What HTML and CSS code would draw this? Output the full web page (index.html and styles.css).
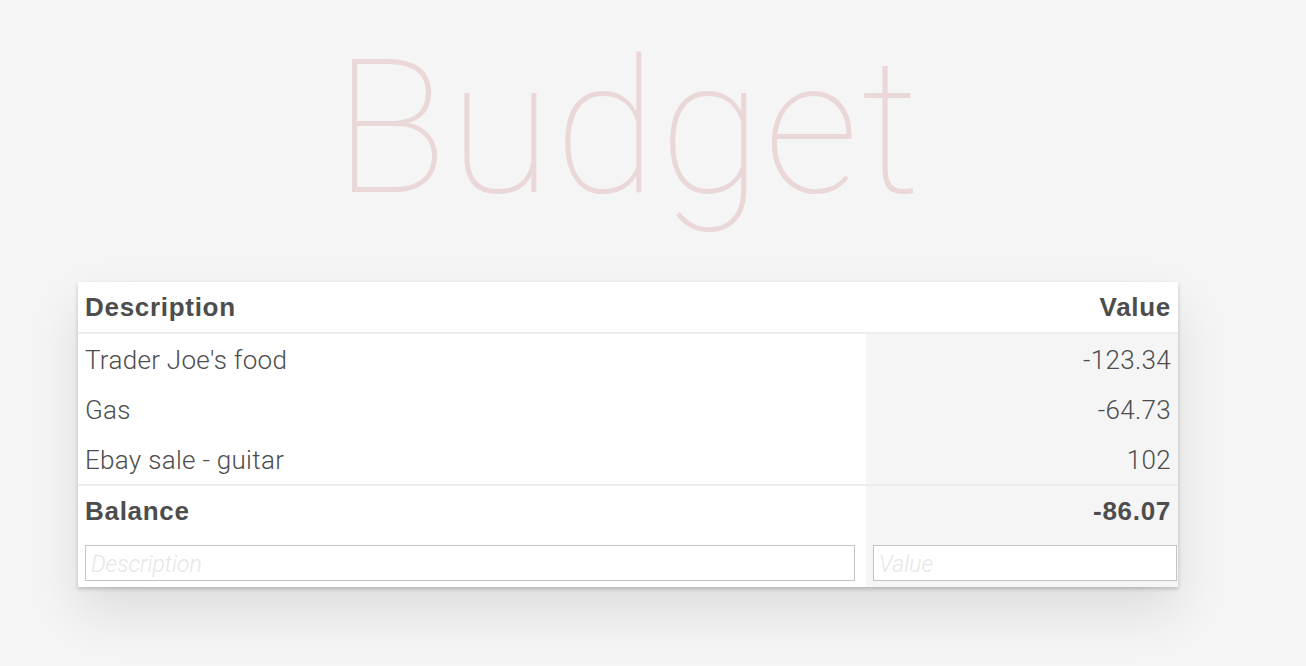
FILE: index.html
```html
<!DOCTYPE html>
<html lang="en">
<head>
<meta charset="utf-8">
<title>Budget</title>
<link rel="stylesheet" href="styles.css">
</head>
<body>
<div class="app">
  <h1 class="title">Budget</h1>
  <div class="card">
    <table class="budget">
      <thead>
        <tr>
          <th class="desc-col">Description</th>
          <th class="val-col">Value</th>
        </tr>
      </thead>
      <tbody>
        <tr><td class="desc-col">Trader Joe's food</td><td class="val-col">-123.34</td></tr>
        <tr><td class="desc-col">Gas</td><td class="val-col">-64.73</td></tr>
        <tr><td class="desc-col">Ebay sale - guitar</td><td class="val-col">102</td></tr>
      </tbody>
      <tfoot>
        <tr class="balance"><td class="desc-col">Balance</td><td class="val-col">-86.07</td></tr>
        <tr class="entry">
          <td class="desc-col"><input class="field field-desc" type="text" placeholder="Description"></td>
          <td class="val-col"><input class="field field-val" type="text" placeholder="Value"></td>
        </tr>
      </tfoot>
    </table>
  </div>
</div>
</body>
</html>
```

FILE: styles.css
```css
html, body {
  margin: 0;
  padding: 0;
}

body {
  background: #f5f5f5;
  color: #4d4d4d;
  font-family: Roboto, "Liberation Sans", sans-serif;
  font-weight: 300;
  min-height: 666px;
  padding-bottom: 80px;
  box-sizing: border-box;
}

.app {
  width: 1100px;
  margin-left: 78px;
  display: flex;
  flex-direction: column;
}

.title {
  margin: 34px 0 60px;
  font-size: 188px;
  line-height: 188px;
  font-weight: 100;
  text-align: center;
  color: rgba(175, 47, 47, 0.15);
  font-family: Roboto, sans-serif;
  letter-spacing: 2px;
}

.card {
  background: #fff;
  box-shadow: 0 2px 4px rgba(0, 0, 0, 0.2), 0 25px 50px 0 rgba(0, 0, 0, 0.1);
}

.budget {
  width: 1100px;
  border-collapse: separate;
  border-spacing: 0;
  font-size: 26px;
}

.budget th,
.budget td {
  height: 50px;
  padding: 0 7px;
  box-sizing: content-box;
}

.budget th {
  font-family: "Liberation Sans", Arial, sans-serif;
  font-weight: 700;
  font-size: 26px;
  letter-spacing: 0.7px;
  text-align: left;
  color: #4d4d4d;
  border-bottom: 2px solid #ededed;
}

.budget tbody tr:last-child td {
  border-bottom: 2px solid #ededed;
}

.budget tbody td {
  padding-top: 2px;
  height: 48px;
}

.desc-col {
  text-align: left;
}

.budget .val-col {
  width: 297px;
  text-align: right;
  padding-right: 7px;
  padding-left: 8px;
}

.budget tbody .val-col,
.budget tfoot .val-col {
  background: #f5f5f5;
}

.budget td {
  color: #4d4d4d;
  letter-spacing: 0.3px;
}

.balance td {
  font-family: "Liberation Sans", Arial, sans-serif;
  font-weight: 700;
  letter-spacing: 0.7px;
  padding-top: 1px;
  height: 49px;
}

.entry td {
  height: 37px;
  padding-top: 9px;
  padding-bottom: 5px;
  vertical-align: top;
}

.budget .entry .val-col {
  padding-left: 7px;
  padding-right: 1px;
}

.field {
  display: block;
  box-sizing: border-box;
  height: 36px;
  margin: 0;
  padding: 3px 5px 0;
  border: 1px solid #c4c4c4;
  background: #fff;
  font-family: Roboto, sans-serif;
  font-size: 23px;
  font-weight: 300;
  color: #4d4d4d;
  outline: none;
}

.field-desc {
  width: 770px;
}

.field-val {
  width: 304px;
}

.field::placeholder {
  font-style: italic;
  color: #e6e6e6;
}
```
